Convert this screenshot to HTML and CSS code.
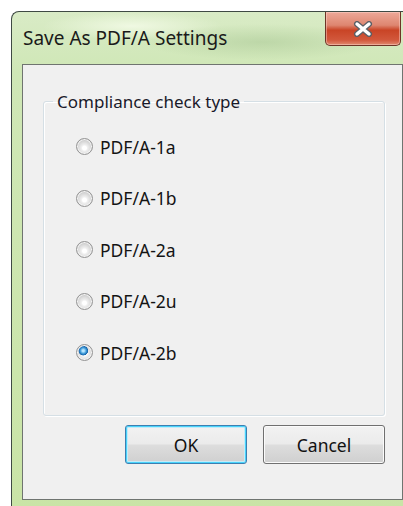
FILE: index.html
```html
<!DOCTYPE html>
<html>
<head>
<meta charset="utf-8">
<link rel="stylesheet" href="styles.css">
<title>Save As PDF/A Settings</title>
</head>
<body>
<div class="window">
  <div class="titlebar">
    <span class="title">Save As PDF/A Settings</span>
    <button class="close" aria-label="Close">
      <svg width="22" height="16" viewBox="0 0 22 16">
        <path d="M5 3 L17 13 M17 3 L5 13" stroke="#5a5f66" stroke-width="6" stroke-linecap="round"/>
        <path d="M5 3 L17 13 M17 3 L5 13" stroke="#ffffff" stroke-width="3.4" stroke-linecap="round"/>
      </svg>
    </button>
  </div>
  <div class="client">
    <fieldset class="group">
      <legend>Compliance check type</legend>
      <div class="options">
        <label class="option"><span class="radio"></span>PDF/A-1a</label>
        <label class="option"><span class="radio"></span>PDF/A-1b</label>
        <label class="option"><span class="radio"></span>PDF/A-2a</label>
        <label class="option"><span class="radio"></span>PDF/A-2u</label>
        <label class="option"><span class="radio checked"></span>PDF/A-2b</label>
      </div>
    </fieldset>
    <div class="actions">
      <button class="btn default">OK</button>
      <button class="btn">Cancel</button>
    </div>
  </div>
</div>
</body>
</html>
```

FILE: styles.css
```css
html, body {
  margin: 0;
  padding: 0;
  background: #ffffff;
  overflow: hidden;
  width: 403px;
  height: 506px;
}

body {
  font-family: "Noto Sans", "Open Sans", sans-serif;
  color: #141414;
}

.window {
  box-sizing: border-box;
  margin: 11px 0 0 11px;
  width: 404px;
  height: 510px;
  border: 1px solid #3f4a44;
  border-right: none;
  border-radius: 8px 0 0 0;
  background:
    radial-gradient(ellipse 120px 18px at 250px 30px, rgba(170, 200, 150, 0.55), transparent),
    radial-gradient(ellipse 90px 14px at 120px 14px, rgba(250, 255, 240, 0.7), transparent),
    linear-gradient(#d9ebc6, #cfe7b6 60px, #c9e4a6);
  padding: 0 0 0 10px;
}

.titlebar {
  height: 52px;
  display: flex;
  align-items: flex-start;
  justify-content: space-between;
}

.title {
  margin-top: 13px;
  margin-left: 1px;
  font-size: 19px;
  color: #1a1a1a;
}

.close {
  width: 76px;
  height: 34px;
  margin-right: 14px;
  border: 1px solid #6e3427;
  border-top: none;
  border-radius: 0 0 5px 5px;
  background: linear-gradient(#eda898, #de8670 40%, #c94426 55%, #d2583c 85%, #e08a6f);
  box-shadow: inset 0 0 0 1px rgba(255, 220, 210, 0.45);
  display: flex;
  align-items: center;
  justify-content: center;
  padding: 0;
}

.close svg {
  display: block;
}

.client {
  box-sizing: border-box;
  width: 381px;
  height: 436px;
  border: 1px solid #6f7470;
  background: #f0f0f0;
  padding: 25px 0 0 20px;
}

.group {
  box-sizing: border-box;
  margin: 0;
  width: 342px;
  height: 326px;
  padding: 0;
  border: 1px solid #d5dfe5;
  border-radius: 3px;
  box-shadow: inset 1px 1px 0 #ffffff, 1px 1px 0 #ffffff;
}

.group legend {
  margin-left: 9px;
  padding: 0 4px;
  font-size: 17px;
  color: #1a1a2a;
}

.options {
  display: flex;
  flex-direction: column;
  padding: 8px 0 0 32px;
}

.option {
  height: 51.5px;
  display: flex;
  align-items: center;
  gap: 7px;
  font-size: 17.5px;
}

.radio {
  box-sizing: border-box;
  width: 17px;
  height: 17px;
  border-radius: 50%;
  border: 1px solid #949494;
  background: radial-gradient(circle at 50% 60%, #ffffff 0 2px, #f0f0f0 3px, #d4d4d4 7px, #c8c8c8 8px);
  box-shadow: inset 0 0 0 1px #f4f4f4;
}

.radio.checked {
  background:
    radial-gradient(circle at 42% 38%, #b8e6ff 0 1px, #3d9ad8 3px, #1762a8 4.5px, transparent 5px),
    radial-gradient(circle at 50% 55%, #ffffff 0 2px, #eeeeee 4px, #d0d0d0 8px);
}

.actions {
  display: flex;
  justify-content: flex-end;
  gap: 16px;
  width: 342px;
  margin-top: 9px;
}

.btn {
  box-sizing: border-box;
  width: 122px;
  height: 39px;
  border: 1px solid #707070;
  border-radius: 3px;
  background: linear-gradient(#f2f2f2, #ebebeb 48%, #dddddd 52%, #cfcfcf);
  box-shadow: inset 0 0 0 1px #fbfbfb;
  font-family: "Noto Sans", "Open Sans", sans-serif;
  font-size: 17.5px;
  color: #111;
  padding: 0;
}

.btn.default {
  border-color: #3c7fb1;
  box-shadow: inset 0 0 0 1px #48d3fb, inset 0 0 0 2px #c4ebf8;
}
```
